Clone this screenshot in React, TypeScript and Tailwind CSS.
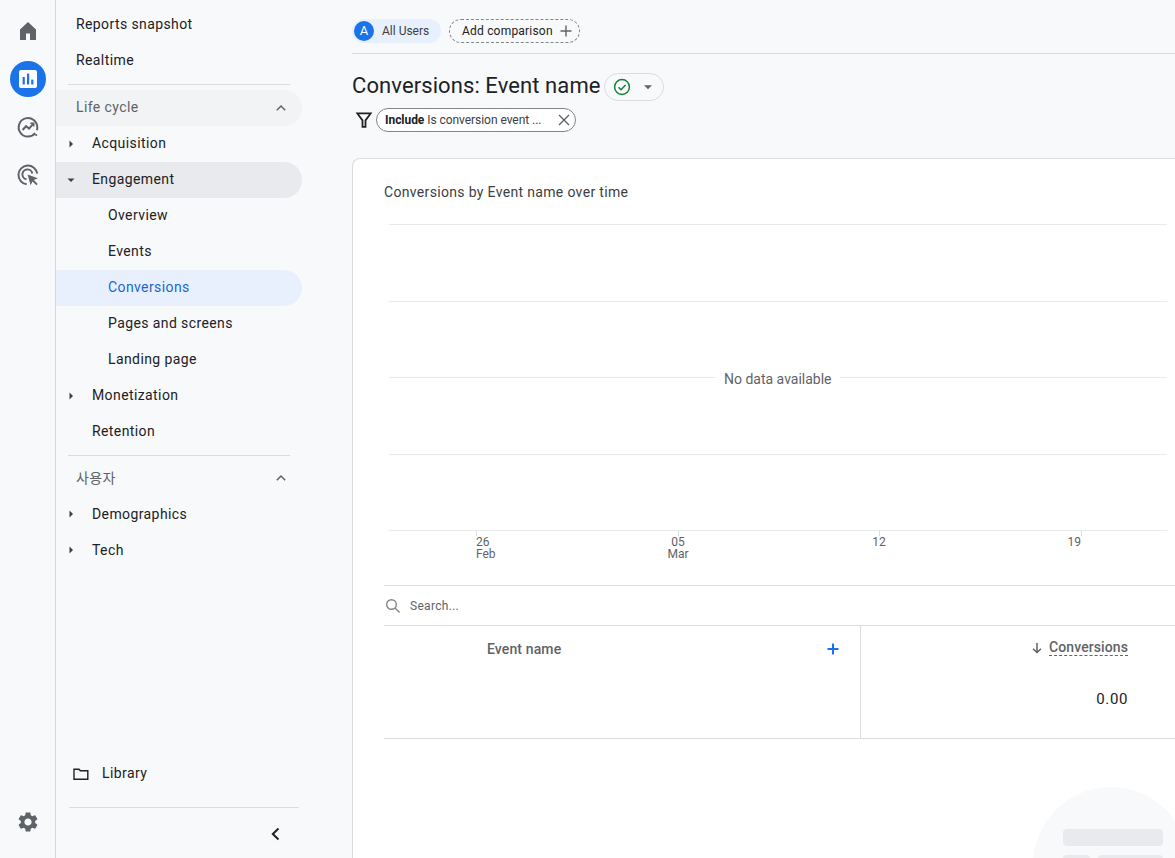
import { ReactNode } from "react";

const GEAR =
	"M19.14 12.94c.04-.3.06-.61.06-.94 0-.32-.02-.64-.07-.94l2.03-1.58c.18-.14.23-.41.12-.61l-1.92-3.32c-.12-.22-.37-.29-.59-.22l-2.39.96c-.5-.38-1.03-.7-1.62-.94l-.36-2.54c-.04-.24-.24-.41-.48-.41h-3.84c-.24 0-.43.17-.47.41l-.36 2.54c-.59.24-1.13.57-1.62.94l-2.39-.96c-.22-.08-.47 0-.59.22L2.74 8.87c-.12.21-.08.47.12.61l2.03 1.58c-.05.3-.09.63-.09.94s.02.64.07.94l-2.03 1.58c-.18.14-.23.41-.12.61l1.92 3.32c.12.22.37.29.59.22l2.39-.96c.5.38 1.03.7 1.62.94l.36 2.54c.05.24.24.41.48.41h3.84c.24 0 .44-.17.47-.41l.36-2.54c.59-.24 1.13-.56 1.62-.94l2.39.96c.22.08.47 0 .59-.22l1.92-3.32c.12-.22.07-.47-.12-.61l-2.01-1.58zM12 15.6c-1.98 0-3.6-1.62-3.6-3.6s1.62-3.6 3.6-3.6 3.6 1.62 3.6 3.6-1.62 3.6-3.6 3.6z";

function RailButton({ children }: { children: ReactNode }) {
	return <div className="flex h-12 w-full items-center justify-center">{children}</div>;
}

function Rail() {
	return (
		<div className="flex h-full w-[56px] shrink-0 flex-col items-center border-r border-[#d5d7db] pt-[7px] pb-3">
			<RailButton>
				<svg width="24" height="24" viewBox="0 0 24 24" fill="#5f6368">
					<path d="M4 21V10.5L12 3l8 7.5V21h-6v-6.5h-4V21z" />
				</svg>
			</RailButton>
			<RailButton>
				<div className="flex h-9 w-9 items-center justify-center rounded-full bg-[#1a73e8]">
					<svg width="18" height="18" viewBox="0 0 18 18">
						<rect width="18" height="18" rx="2" fill="#fff" />
						<rect x="3.6" y="7" width="2.2" height="7.5" fill="#1a73e8" />
						<rect x="8" y="3.6" width="2.2" height="10.9" fill="#1a73e8" />
						<rect x="12.2" y="9.6" width="2.2" height="4.9" fill="#1a73e8" />
					</svg>
				</div>
			</RailButton>
			<RailButton>
				<svg width="24" height="24" viewBox="0 0 24 24" fill="none" stroke="#5f6368" strokeWidth="2">
					<path d="M19.2 18.2A9.3 9.3 0 1 1 21.3 12.5c0 1-.1 1.9-.4 2.8" />
					<path d="M6.5 15l3.6-3.8 3 2.4 4.2-5" />
					<path d="M14.3 8.2h3.4v3.4" strokeWidth="1.6" />
					<circle cx="20.2" cy="20" r="1.1" fill="#5f6368" stroke="none" />
				</svg>
			</RailButton>
			<RailButton>
				<svg width="24" height="24" viewBox="0 0 24 24" fill="none" stroke="#5f6368" strokeWidth="2">
					<path d="M21.2 10.6A9.4 9.4 0 1 0 10.7 21.3" />
					<path d="M16.3 10.5a5 5 0 1 0-5.8 5.8" />
					<path d="M11.6 11.6l10.2 3.6-3.9 1.9 3.8 3.9-1.3 1.3-3.9-3.8-1.9 3.7z" fill="#5f6368" stroke="none" />
				</svg>
			</RailButton>
			<div className="mt-auto">
				<RailButton>
					<svg width="24" height="24" viewBox="0 0 24 24" fill="#5f6368">
						<path d={GEAR} />
					</svg>
				</RailButton>
			</div>
		</div>
	);
}

function Caret({ open }: { open?: boolean }) {
	return (
		<svg width="10" height="10" viewBox="0 0 10 10" fill="#3c4043" className="absolute left-[10px] top-[13px]">
			{open ? <path d="M1.5 3.5h7L5 7z" /> : <path d="M3.5 1.5v7L7 5z" />}
		</svg>
	);
}

function NavItem({
	label,
	caret,
	open,
	indent = "pl-9",
	lift = "pb-[1px]",
	className = "",
}: {
	label: string;
	caret?: boolean;
	open?: boolean;
	indent?: string;
	lift?: string;
	className?: string;
}) {
	return (
		<div
			className={`relative flex h-9 w-[246px] items-center rounded-r-[18px] text-[14px] tracking-[0.4px] ${lift} ${indent} ${className || "text-[#202124]"}`}
		>
			{caret && <Caret open={open} />}
			{label}
		</div>
	);
}

function SectionHeader({ label, lift = "pb-[1px]", className = "" }: { label: string; lift?: string; className?: string }) {
	return (
		<div className={`flex h-9 w-[246px] items-center justify-between rounded-r-[18px] pl-5 pr-[14px] text-[14px] tracking-[0.4px] text-[#5f6368] ${className}`}>
			<span className={lift}>{label}</span>
			<svg width="14" height="14" viewBox="0 0 14 14" fill="none" stroke="#5f6368" strokeWidth="1.5">
				<path d="M2.8 9.2L7 5l4.2 4.2" />
			</svg>
		</div>
	);
}

function Sidebar() {
	return (
		<div className="flex h-full w-[296px] shrink-0 flex-col pt-[6px]">
			<NavItem label="Reports snapshot" indent="pl-5" lift="pb-0" />
			<NavItem label="Realtime" indent="pl-5" lift="pb-0" />
			<div className="ml-[12px] mt-[6px] mb-[5px] h-px w-[222px] bg-[#dadce0]" />
			<SectionHeader label="Life cycle" className="bg-[#f1f3f4]" />
			<NavItem label="Acquisition" caret />
			<NavItem label="Engagement" caret open className="bg-[#e8eaed] text-[#202124]" />
			<NavItem label="Overview" indent="pl-[52px]" />
			<NavItem label="Events" indent="pl-[52px]" />
			<NavItem label="Conversions" indent="pl-[52px]" className="bg-[#e8f0fe] text-[#1967d2]" />
			<NavItem label="Pages and screens" indent="pl-[52px]" />
			<NavItem label="Landing page" indent="pl-[52px]" />
			<NavItem label="Monetization" caret />
			<NavItem label="Retention" />
			<div className="ml-[12px] mt-[5px] mb-[4px] h-px w-[222px] bg-[#dadce0]" />
			<SectionHeader label="사용자" lift="pb-0" />
			<NavItem label="Demographics" caret lift="pb-0" />
			<NavItem label="Tech" caret lift="pb-0" />
			<div className="mt-auto flex h-9 items-center pb-[1px] pl-[17px] text-[14px] tracking-[0.4px] text-[#202124]">
				<svg width="16" height="14" viewBox="0 0 16 14" fill="none" stroke="#202124" strokeWidth="1.4" className="mr-[13px]">
					<path d="M1 2.2h5l1.4 1.6h7.4v8.5H1z" />
				</svg>
				Library
			</div>
			<div className="ml-[13px] mt-[15px] h-px w-[230px] bg-[#dadce0]" />
			<div className="flex h-[50px] w-[243px] items-center justify-end pr-[18px] pt-[1px]">
				<svg width="12" height="14" viewBox="0 0 12 14" fill="none" stroke="#202124" strokeWidth="2">
					<path d="M9.5 1.5L3.8 7l5.7 5.5" />
				</svg>
			</div>
		</div>
	);
}

function Toolbar() {
	return (
		<div className="flex h-[54px] items-center border-b border-[#dadce0] pt-[9px]">
			<div className="flex h-6 w-[89px] items-center rounded-full bg-[#e8f0fe] pl-[2px]">
				<span className="flex h-5 w-5 items-center justify-center rounded-full bg-[#1a73e8] text-[13px] text-white">A</span>
				<span className="ml-2 text-[12px] text-[#3c4043]">All Users</span>
			</div>
			<div className="ml-2 flex h-6 w-[131px] items-center rounded-full border border-dashed border-[#80868b] pl-[12px] text-[12px] tracking-[0.2px] text-[#202124]">
				Add comparison
				<svg width="14" height="14" viewBox="0 0 14 14" stroke="#5f6368" strokeWidth="1.4" className="ml-[6px]">
					<path d="M7 1.5v11M1.5 7h11" />
				</svg>
			</div>
		</div>
	);
}

function TitleRow() {
	return (
		<div className="mt-[18px] flex h-[28px] items-center">
			<h1 className="text-[22px] font-normal leading-7 tracking-[0.09px] text-[#202124]">Conversions: Event name</h1>
			<div className="ml-[3px] mt-[1px] flex h-[28px] w-[60px] items-center rounded-full border border-[#dadce0] pl-2">
				<svg width="18" height="18" viewBox="0 0 18 18" fill="none" stroke="#188038" strokeWidth="1.5">
					<circle cx="9" cy="9" r="7.4" />
					<path d="M5.5 9.2l2.5 2.5 4.6-4.8" />
				</svg>
				<svg width="10" height="10" viewBox="0 0 10 10" fill="#5f6368" className="ml-[12px]">
					<path d="M1 3.2h8L5 7.2z" />
				</svg>
			</div>
		</div>
	);
}

function FilterRow() {
	return (
		<div className="mt-[8px] flex h-6 items-center">
			<svg width="18" height="18" viewBox="0 0 18 18" fill="#202124" className="ml-[3px] shrink-0">
				<path fillRule="evenodd" d="M0.6 1.5h16.8l-6 8.2V16.8H6.6V9.7zM4 3.3l4.4 5.8v5.9h1.2V9.1L14 3.3z" />
			</svg>
			<div className="ml-[3px] flex h-6 w-[200px] items-center justify-between rounded-full border border-[#80868b] bg-white pl-2 pr-[4px] text-[12px] text-[#3c4043]">
				<span className="tracking-[-0.05px]">
					<b className="font-bold text-[#202124]">Include</b> Is conversion event ...
				</span>
				<svg width="14" height="14" viewBox="0 0 14 14" stroke="#5f6368" strokeWidth="1.4">
					<path d="M2 2l10 10M12 2L2 12" />
				</svg>
			</div>
		</div>
	);
}

function GridLine({ height }: { height: string }) {
	return <div className={`border-t border-[#e8eaed] ${height}`} />;
}

function Tick({ lines, width, align }: { lines: string[]; width: string; align: string }) {
	return (
		<div className={`shrink-0 ${width}`}>
			<div className="h-[5px] w-px bg-[#dadce0]" />
			<div className={`w-max text-[12px] leading-3 text-[#5f6368] ${align}`}>
				{lines.map((line) => (
					<div key={line}>{line}</div>
				))}
			</div>
		</div>
	);
}

function Chart() {
	return (
		<div className="relative mt-[23px] ml-[5px] w-[778px]">
			<GridLine height="h-[77px]" />
			<GridLine height="h-[76px]" />
			<GridLine height="h-[77px]" />
			<GridLine height="h-[76px]" />
			<div className="border-t border-[#e8eaed]" />
			<div className="flex h-[54px] pl-[87px]">
				<Tick lines={["26", "Feb"]} width="w-[202px]" align="text-left" />
				<Tick lines={["05", "Mar"]} width="w-[201px]" align="-translate-x-1/2 text-center" />
				<Tick lines={["12"]} width="w-[202px]" align="-translate-x-1/2 text-center" />
				<Tick lines={["19"]} width="w-[60px]" align="-translate-x-full text-right" />
			</div>
			<div className="absolute left-[327px] top-[147px] bg-white px-2 text-[14px] leading-[16px] text-[#5f6368]">
				No data available
			</div>
		</div>
	);
}

function DataTable() {
	return (
		<div>
			<div className="flex h-[41px] items-center border-y border-[#dadce0] pl-[1px] text-[12px] tracking-[0.3px] text-[#5f6368]">
				<svg width="16" height="16" viewBox="0 0 16 16" fill="none" stroke="#80868b" strokeWidth="1.4">
					<circle cx="6.5" cy="6.5" r="4.8" />
					<path d="M10 10l4.6 4.6" />
				</svg>
				<span className="ml-[9px]">Search...</span>
			</div>
			<div className="flex h-[113px] border-b border-[#dadce0]">
				<div className="flex h-full w-[477px] items-start justify-between border-r border-[#dadce0] pl-[103px] pr-[20px] pt-[15px]">
					<span className="text-[14px] font-medium leading-[16px] tracking-[0.12px] text-[#5f6368]">Event name</span>
					<svg width="14" height="14" viewBox="0 0 14 14" stroke="#1a73e8" strokeWidth="2" className="mt-[1px]">
						<path d="M7 1.5v11M1.5 7h11" />
					</svg>
				</div>
				<div className="flex w-[267px] flex-col items-end">
					<div className="mt-[13px] flex items-center">
						<svg width="12" height="12" viewBox="0 0 12 12" fill="none" stroke="#5f6368" strokeWidth="1.5">
							<path d="M6 1v9.5M2 6.8L6 10.5l4-3.7" />
						</svg>
						<span className="ml-[6px] border-b border-dashed border-[#5f6368] text-[14px] font-medium leading-[16px] tracking-[0.1px] text-[#5f6368]">
							Conversions
						</span>
					</div>
					<div className="mt-[35px] text-[15px] leading-[16px] tracking-[0.6px] text-[#202124]">0.00</div>
				</div>
			</div>
		</div>
	);
}

function Card() {
	return (
		<div className="relative mt-[26px] flex-1 overflow-hidden rounded-tl-lg border-l border-t border-[#dadce0] bg-white pl-[31px] pt-[25px]">
			<div className="text-[14px] leading-[17px] tracking-[0.33px] text-[#3c4043]">Conversions by Event name over time</div>
			<Chart />
			<DataTable />
			<div className="absolute left-[680px] top-[628px] h-[156px] w-[156px] rounded-full bg-[#f8f9fa] pl-[30px] pt-[42px]">
				<div className="h-[17px] w-[100px] rounded-[4px] bg-[#e8eaed]" />
				<div className="mt-[9px] flex gap-2">
					<div className="h-[17px] w-[27px] rounded-[4px] bg-[#e8eaed]" />
					<div className="h-[17px] w-[65px] rounded-[4px] bg-[#e8eaed]" />
				</div>
			</div>
		</div>
	);
}

export default function App() {
	return (
		<div className="flex h-[858px] w-[1175px] overflow-hidden bg-[#f8f9fb] font-['Roboto','Noto_Sans_CJK_KR',sans-serif]">
			<Rail />
			<Sidebar />
			<div className="flex h-full w-[823px] shrink-0 flex-col">
				<Toolbar />
				<TitleRow />
				<FilterRow />
				<Card />
			</div>
		</div>
	);
}
